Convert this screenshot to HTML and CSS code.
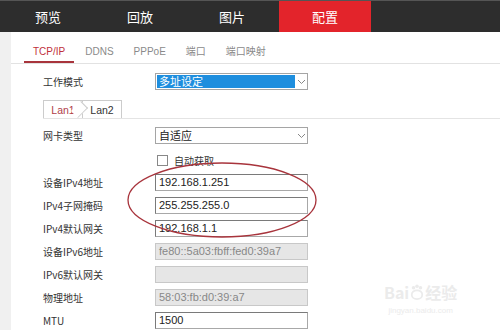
FILE: index.html
```html
<!DOCTYPE html>
<html>
<head>
  <meta charset="UTF-8">
  <title>配置 - TCP/IP</title>
  <link rel="stylesheet" href="styles.css">
</head>
<body>
  <div class="topnav">
    <div class="nav-item">预览</div>
    <div class="nav-item">回放</div>
    <div class="nav-item">图片</div>
    <div class="nav-item active">配置</div>
  </div>

  <div class="main">
    <div class="side"></div>
    <div class="content">
      <div class="subtabs">
        <div class="subtab active">TCP/IP</div>
        <div class="subtab">DDNS</div>
        <div class="subtab">PPPoE</div>
        <div class="subtab">端口</div>
        <div class="subtab">端口映射</div>
      </div>

      <div class="form">
        <div class="row">
          <label>工作模式</label>
          <div class="select selected">
            <span class="sel-text">多址设定</span>
            <span class="arrow"><svg width="9" height="6" viewBox="0 0 9 6"><path d="M1 1 L4.5 4.5 L8 1" fill="none" stroke="#888" stroke-width="1"/></svg></span>
          </div>
        </div>

        <div class="lan-tabs">
          <div class="lan active">Lan1</div>
          <div class="lan">Lan2</div>
        </div>

        <div class="row">
          <label>网卡类型</label>
          <div class="select">
            <span class="sel-text">自适应</span>
            <span class="arrow"><svg width="9" height="6" viewBox="0 0 9 6"><path d="M1 1 L4.5 4.5 L8 1" fill="none" stroke="#888" stroke-width="1"/></svg></span>
          </div>
        </div>

        <div class="row check-row">
          <label></label>
          <span class="checkbox"></span><span class="check-text">自动获取</span>
        </div>

        <div class="row"><label>设备IPv4地址</label><div class="input">192.168.1.251</div></div>
        <div class="row"><label>IPv4子网掩码</label><div class="input">255.255.255.0</div></div>
        <div class="row"><label>IPv4默认网关</label><div class="input">192.168.1.1</div></div>
        <div class="row"><label>设备IPv6地址</label><div class="input disabled">fe80::5a03:fbff:fed0:39a7</div></div>
        <div class="row"><label>IPv6默认网关</label><div class="input disabled"></div></div>
        <div class="row"><label>物理地址</label><div class="input disabled">58:03:fb:d0:39:a7</div></div>
        <div class="row"><label>MTU</label><div class="input">1500</div></div>
      </div>
    </div>
  </div>

  <svg class="circle" width="200" height="82" viewBox="0 0 200 82">
    <ellipse cx="100" cy="40" rx="94" ry="37" fill="none" stroke="#a8343c" stroke-width="1.3"/>
  </svg>

  <div class="watermark">
    <div class="wm-logo">Bai<svg class="wm-paw" width="14" height="16" viewBox="0 0 16 18"><circle cx="4" cy="4" r="2" fill="#ebebeb"/><circle cx="8" cy="2.5" r="2" fill="#ebebeb"/><circle cx="12" cy="4" r="2" fill="#ebebeb"/><ellipse cx="8" cy="12" rx="6" ry="5" fill="none" stroke="#ebebeb" stroke-width="2"/></svg>经验</div>
    <div class="wm-url">jingyan.baidu.com</div>
  </div>
</body>
</html>
```

FILE: styles.css
```css
body {
  margin: 0;
  width: 500px;
  height: 330px;
  overflow: hidden;
  background: #fff;
  font-family: "Liberation Sans", "Noto Sans CJK SC", sans-serif;
  color: #333;
  position: relative;
}
.topnav {
  display: flex;
  height: 32px;
  background: #2d2d2d;
  border-top: 1px solid #555;
  box-sizing: border-box;
  padding-left: 2px;
}
.nav-item {
  width: 92px;
  text-align: center;
  line-height: 31px;
  color: #fff;
  font-size: 13px;
  font-family: "Noto Sans CJK SC", sans-serif;
}
.nav-item.active {
  background: #e3242b;
  margin-left: 1px;
}
.main {
  display: flex;
}
.side {
  width: 11px;
  height: 298px;
  background: #f0f0f0;
}
.content {
  flex: 1;
}
.subtabs {
  display: flex;
  gap: 2px;
  height: 31px;
  padding-left: 13px;
  border-bottom: 1px solid #e2e2e2;
}
.subtab {
  margin-top: 14px;
  padding: 0 9px 3px;
  line-height: 12px;
  height: 12px;
  font-size: 10px;
  color: #8a8a8a;
  border-bottom: 2px solid transparent;
}
.subtab.active {
  color: #c0303a;
  border-bottom-color: #a8343c;
}
.form {
  padding-left: 32px;
  padding-top: 9px;
}
.row {
  display: flex;
  align-items: center;
  height: 17px;
  margin-bottom: 6px;
  font-size: 10.5px;
}
.row label {
  width: 112px;
  flex: none;
  color: #333;
  font-family: "Noto Sans CJK SC", sans-serif;
  font-size: 10px;
}
.select {
  width: 153px;
  height: 17px;
  box-sizing: border-box;
  border: 1px solid #a5a5a5;
  display: flex;
  align-items: stretch;
  font-family: "Noto Sans CJK SC", sans-serif;
  font-size: 11px;
}
.sel-text {
  flex: 1;
  padding-left: 3px;
  line-height: 15px;
  color: #222;
}
.select.selected .sel-text {
  background: #1e8ede;
  color: #fff;
  margin: 1px 0 1px 1px;
  line-height: 13px;
  padding-left: 2px;
}
.arrow {
  width: 12px;
  display: flex;
  align-items: center;
  justify-content: center;
}
.lan-tabs {
  display: flex;
  height: 18px;
  margin: 10px 0 8px;
  border-bottom: 1px solid #e4e4e4;
  font-size: 10.5px;
}
.lan {
  width: 38px;
  line-height: 18px;
  text-align: center;
  border: 1px solid #ccc;
  border-bottom: none;
  color: #333;
}
.lan.active {
  color: #b0404a;
  border-right: none;
  position: relative;
}
.lan.active::after {
  content: "";
  position: absolute;
  right: -4px;
  top: 2px;
  width: 12px;
  height: 12px;
  border-top: 1px solid #ccc;
  border-right: 1px solid #ccc;
  transform: rotate(45deg) scale(0.75, 1.1);
  background: #fff;
}
.check-row {
  height: 12px;
  margin-top: 10px;
  margin-bottom: 8px;
}
.check-row label {
  width: 114px;
}
.checkbox {
  width: 9px;
  height: 9px;
  border: 1px solid #888;
  margin-right: 6px;
}
.check-text {
  font-family: "Noto Sans CJK SC", sans-serif;
  font-size: 10px;
}
.input {
  width: 153px;
  height: 17px;
  box-sizing: border-box;
  border: 1px solid #a8a8a8;
  border-top-color: #7a7a7a;
  border-left-color: #7a7a7a;
  padding-left: 3px;
  line-height: 15px;
  font-size: 11px;
  color: #222;
}
.input.disabled {
  background: #e6e6e6;
  border-color: #c8c8c8;
  color: #888;
}
.circle {
  position: absolute;
  left: 122px;
  top: 160px;
}
.watermark {
  position: absolute;
  left: 384px;
  top: 280px;
  color: #ebebeb;
  text-align: center;
}
.wm-logo {
  display: flex;
  align-items: center;
  font-size: 16px;
  font-weight: bold;
  font-family: "Noto Sans CJK SC", sans-serif;
  line-height: 24px;
}
.wm-paw {
  margin: 0 1px;
}
.wm-url {
  margin-top: 2px;
  font-size: 8px;
  line-height: 10px;
}
```
